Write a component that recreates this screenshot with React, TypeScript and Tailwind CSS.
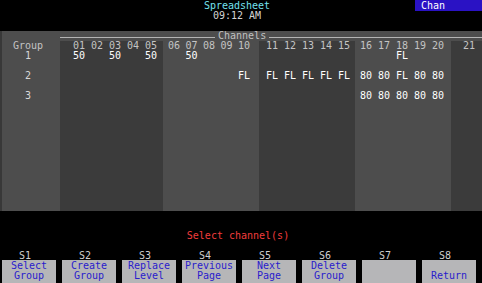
const mono = { fontFamily: '"DejaVu Sans Mono", "Liberation Mono", monospace' };

type Block = {
    channels: number[];
    width: string;
    pad: string;
    cell: string;
    dark: boolean;
};

const blocks: Block[] = [
    { channels: [1, 2, 3, 4, 5], width: "w-[103px]", pad: "pl-[13px]", cell: "w-[18px]", dark: true },
    { channels: [6, 7, 8, 9, 10], width: "w-[96px]", pad: "pl-[5px]", cell: "w-[17.5px]", dark: false },
    { channels: [11, 12, 13, 14, 15], width: "w-[96px]", pad: "pl-[7px]", cell: "w-[18px]", dark: true },
    { channels: [16, 17, 18, 19, 20], width: "w-[96px]", pad: "pl-[5px]", cell: "w-[18px]", dark: false },
    { channels: [21], width: "flex-1", pad: "pl-[12px]", cell: "w-[18px]", dark: true },
];

// group -> channel -> level
const groups: Record<number, string>[] = [
    { 1: "50", 3: "50", 5: "50", 7: "50", 18: "FL" },
    { 10: "FL", 11: "FL", 12: "FL", 13: "FL", 14: "FL", 15: "FL", 16: "80", 17: "80", 18: "FL", 19: "80", 20: "80" },
    { 16: "80", 17: "80", 18: "80", 19: "80", 20: "80" },
];

const softkeys = [
    { key: "S1", lines: ["Select", "Group"] },
    { key: "S2", lines: ["Create", "Group"] },
    { key: "S3", lines: ["Replace", "Level"] },
    { key: "S4", lines: ["Previous", "Page"] },
    { key: "S5", lines: ["Next", "Page"] },
    { key: "S6", lines: ["Delete", "Group"] },
    { key: "S7", lines: ["", ""] },
    { key: "S8", lines: ["", "Return"] },
];

const pad2 = (n: number) => (n < 10 ? "0" + n : String(n));

function ChannelBlock({ block }: { block: Block }) {
    return (
        <div className={`${block.width} ${block.pad} flex flex-col ${block.dark ? "bg-[#3b3b3b]" : ""}`}>
            <div className="flex h-[10px] text-[#c4c4c4]">
                {block.channels.map((ch) => (
                    <div key={ch} className={`${block.cell} shrink-0 whitespace-pre`}>
                        {pad2(ch)}
                    </div>
                ))}
            </div>
            <div className="flex flex-col gap-[10px]">
                {groups.map((g, i) => (
                    <div key={i} className="flex h-[10px] text-white">
                        {block.channels.map((ch) => (
                            <div key={ch} className={`${block.cell} shrink-0 whitespace-pre`}>
                                {g[ch] ?? ""}
                            </div>
                        ))}
                    </div>
                ))}
            </div>
        </div>
    );
}

export default function App() {
    return (
        <div
            className="w-[482px] h-[283px] bg-black overflow-hidden text-[10px] leading-[10px] flex flex-col"
            style={mono}
        >
            {/* title bar */}
            <div className="relative h-[31px] shrink-0">
                <div className="flex flex-col items-center pt-[1px] pr-[8px]">
                    <span className="text-[#74e0ee]">Spreadsheet</span>
                    <span className="text-[#d4d4d4]">09:12 AM</span>
                </div>
                <div className="absolute top-0 right-0 w-[67px] h-[11px] bg-[#2a12c4] text-white pl-[6px] pt-[1px]">
                    Chan
                </div>
            </div>

            {/* spreadsheet panel */}
            <div className="h-[180px] shrink-0 bg-[#4d4d4d] border-l-2 border-[#383838] flex flex-col">
                <div className="h-[10px] flex items-center text-[#c0c0c0]">
                    <div className="w-[58px] shrink-0" />
                    <div className="w-[155px] h-[1px] bg-[#b4b4b4] mt-[3px]" />
                    <span className="px-[3px]">Channels</span>
                    <div className="flex-1 h-[1px] bg-[#b4b4b4] mt-[3px]" />
                </div>
                <div className="flex-1 flex">
                    <div className="w-[58px] shrink-0 flex flex-col items-center pr-[6px]">
                        <div className="h-[10px] text-[#c4c4c4]">Group</div>
                        <div className="flex flex-col items-center gap-[10px] text-[#d8d8d8]">
                            <div className="h-[10px]">1</div>
                            <div className="h-[10px]">2</div>
                            <div className="h-[10px]">3</div>
                        </div>
                    </div>
                    {blocks.map((b, i) => (
                        <ChannelBlock key={i} block={b} />
                    ))}
                </div>
            </div>

            {/* prompt */}
            <div className="mt-[20px] h-[10px] text-center text-[#f03c3c] pr-[6px]">
                Select channel(s)
            </div>

            {/* softkeys */}
            <div className="mt-[10px] grid grid-cols-8 w-[480px]">
                {softkeys.map((s) => (
                    <div key={s.key} className="pl-[2px] flex flex-col">
                        <div className="w-[54px] h-[9px] leading-[9px] text-center text-[#d0d0d0] pr-[8px]">
                            {s.key}
                        </div>
                        <div className="w-[54px] h-[23px] bg-[#b6b6b8] pt-[1px] text-[#2a1ccc] flex flex-col items-center">
                            <div className="h-[10px] whitespace-pre">{s.lines[0]}</div>
                            <div className="h-[10px] whitespace-pre">{s.lines[1]}</div>
                        </div>
                    </div>
                ))}
            </div>
        </div>
    );
}
